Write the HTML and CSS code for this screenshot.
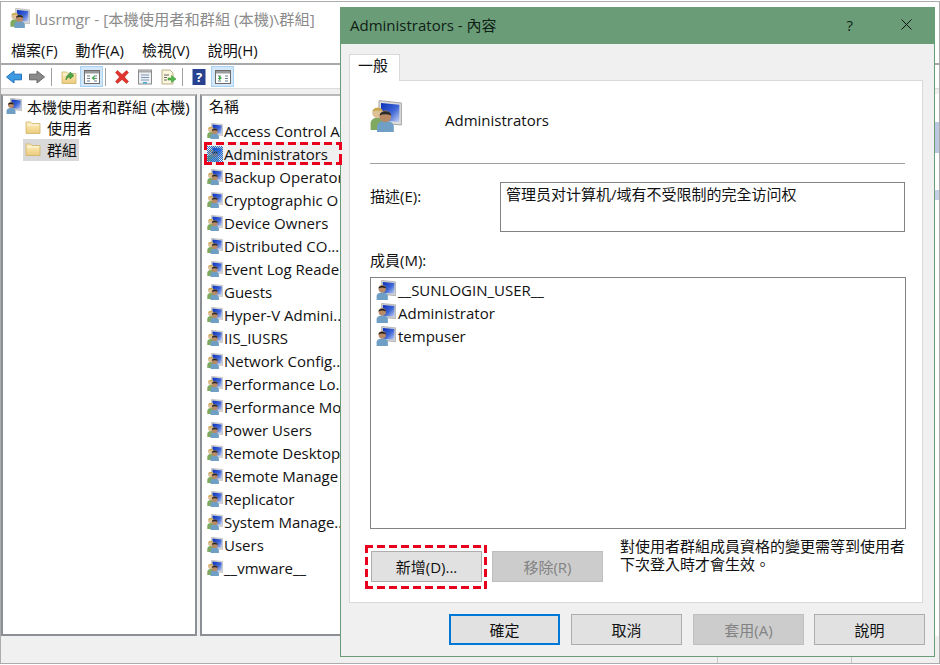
FILE: index.html
```html
<!DOCTYPE html>
<html lang="zh-Hant">
<head>
<meta charset="utf-8">
<title>lusrmgr</title>
<link rel="stylesheet" href="styles.css">
</head>
<body>
<svg class="sprite" aria-hidden="true">
  <defs>
    <linearGradient id="scr" x1="0" y1="0" x2="1" y2="1"><stop offset="0" stop-color="#0a2fb8"/><stop offset="0.55" stop-color="#3f66d6"/><stop offset="1" stop-color="#c5d3f2"/></linearGradient>
    <linearGradient id="fold" x1="0" y1="0" x2="0" y2="1"><stop offset="0" stop-color="#fdf0bf"/><stop offset="1" stop-color="#eccb7c"/></linearGradient>
    <pattern id="chk" width="2" height="2" patternUnits="userSpaceOnUse"><rect width="1" height="1" fill="#1f6fd0"/><rect x="1" y="1" width="1" height="1" fill="#1f6fd0"/></pattern>
    <symbol id="group" viewBox="0 0 16 16">
      <path d="M4.500 0.300 15.700 1.500V12.500L4.500 11.500Z" fill="#dcdcdc" stroke="#a5a5a5" stroke-width=".5"/>
      <path d="M5.500 1.500 14.700 2.400V11L5.500 10.200Z" fill="url(#scr)"/>
      <path d="M0.300 15v-3.200c0-1.900 1.600-2.900 3.500-2.900s3.500 1 3.500 2.900V15Z" fill="#7fa860"/>
      <circle cx="3.800" cy="6.400" r="2.700" fill="#dcc096"/>
      <path d="M1.200 5.800c.2-2.400 5-2.600 5.200 0-1.700-.8-3.500-.8-5.200 0Z" fill="#c9a84a"/>
      <path d="M3.500 16v-2.500c0-2.100 2-3.100 4.200-3.100s4.200 1 4.200 3.100V16Z" fill="#6f9fc4"/>
      <circle cx="7.700" cy="8.200" r="2.900" fill="#b98a66"/>
      <path d="M4.800 7.800c.2-2.800 5.600-3 5.800 0-1.800-.9-4-.9-5.800 0Z" fill="#2b2b2b"/>
    </symbol>
    <symbol id="user" viewBox="0 0 16 16">
      <path d="M4.500 0.300 15.700 1.500V12.500L4.500 11.500Z" fill="#d2d2d2" stroke="#9a9a9a" stroke-width=".5"/>
      <path d="M5.500 1.500 14.700 2.400V11L5.500 10.200Z" fill="url(#scr)"/>
      <path d="M0.500 16v-3c0-2 2-3 4.500-3s4.500 1 4.500 3v3Z" fill="#6f9fc4"/>
      <circle cx="5" cy="7" r="3" fill="#b98a66"/>
      <path d="M2 6.700c.2-2.700 5.800-2.900 6 0-1.800-.9-4.200-.9-6 0Z" fill="#1d1d1d"/>
    </symbol>
    <symbol id="folder" viewBox="0 0 16 16">
      <path d="M1 3h4.500l1.500 1.500h8v10H1Z" fill="url(#fold)" stroke="#cfb36a" stroke-width=".8"/>
      <path d="M2 5.500h12v1H2Z" fill="#fff" opacity=".7"/>
    </symbol>
    <symbol id="pane" viewBox="0 0 16 16">
      <rect x=".5" y="1.500" width="15" height="13" fill="#fff" stroke="#6d6d6d"/>
      <rect x="1" y="2" width="14" height="2.500" fill="#9a9a9a"/>
      <path d="M3 7h3M3 9.500h3M3 12h3M10 7h3M10 9.500h3M10 12h3" stroke="#6d7f8f"/>
    </symbol>
  </defs>
</svg>

<div class="win">
  <header class="titlebar">
    <svg class="ico20"><use href="#group"/></svg>
    <span class="title-text">lusrmgr - [本機使用者和群組 (本機)\群組]</span>
  </header>
  <nav class="menubar">
    <span>檔案(F)</span><span>動作(A)</span><span>檢視(V)</span><span>說明(H)</span>
  </nav>
  <div class="toolbar">
    <svg class="tool" viewBox="0 0 16 16"><path d="M.5 8 8 2V5.200H15.500V10.800H8V14Z" fill="#3d9be4" stroke="#1d6fb8"/></svg>
    <svg class="tool tool-next" viewBox="0 0 16 16"><path d="M15.500 8 8 2V5.200H.5V10.800H8V14Z" fill="#8a8a8a" stroke="#666"/></svg>
    <i class="sep sep-a"></i>
    <svg class="tool" viewBox="0 0 16 16"><use href="#folder"/><path d="M5 11c0-4 2-6 4-6V3l4 3.500L9 10V8c-1.500 0-3 1-4 3Z" fill="#4ea84a" stroke="#2f7d2f" stroke-width=".6"/></svg>
    <span class="tool-btn tool-btn-a"><svg class="ico16" viewBox="0 0 16 16"><use href="#pane"/><path d="M10.500 6.500 7.500 9l3 2.500Z" fill="#3fae49"/></svg></span>
    <i class="sep sep-b"></i>
    <svg class="tool tool-x" viewBox="0 0 16 16"><path d="M1.500 3.500 3.500 1.500 8 5.500 12.500 1.500 14.500 3.500 10.500 8 14.500 12.500 12.500 14.500 8 10.500 3.500 14.500 1.500 12.500 5.500 8Z" fill="#e0342c" stroke="#b32018" stroke-width=".5"/></svg>
    <svg class="tool tool-props" viewBox="0 0 16 16"><rect x="1.500" y="1" width="13" height="14" fill="#eef1f4" stroke="#8b8b8b"/><rect x="2" y="1.500" width="12" height="2" fill="#a8a8a8"/><path d="M4 6h8M4 8.500h8M4 11h8" stroke="#7f97b5"/><rect x="6" y="13" width="4" height="1.500" fill="#3fa7d8"/></svg>
    <svg class="tool tool-export" viewBox="0 0 16 16"><path d="M2 1h8l3 3v11H2Z" fill="#fbf6dc" stroke="#b8b08a"/><path d="M4 6h5M4 8.500h3M4 11h3" stroke="#666"/><path d="M8 9h3.500V6.500L16 10l-4.500 3.500V11H8Z" fill="#55b84c" stroke="#2f8a2f" stroke-width=".5"/></svg>
    <i class="sep sep-c"></i>
    <svg class="tool tool-help" viewBox="0 0 16 16"><rect x="1.500" y="0" width="13" height="16" fill="#26418f"/><text x="8" y="12.500" text-anchor="middle" class="help-q">?</text></svg>
    <span class="tool-btn tool-btn-b"><svg class="ico16" viewBox="0 0 16 16"><use href="#pane"/><path d="M4 6.500 7 9l-3 2.500Z" fill="#3fae49"/></svg></span>
  </div>
  <div class="strip"></div>
  <main class="panes">
    <section class="pane-left">
      <div class="tree-root"><svg class="ico16"><use href="#user"/></svg><span>本機使用者和群組 (本機)</span></div>
      <div class="tree-item tree-first"><svg class="ico16"><use href="#folder"/></svg><span>使用者</span></div>
      <div class="tree-item is-selected"><svg class="ico16"><use href="#folder"/></svg><span>群組</span></div>
    </section>
    <section class="pane-right">
      <div class="col-head">名稱</div>
      <div class="row"><svg class="ico16"><use href="#group"/></svg><span>Access Control A</span></div>
      <div class="row row-hit"><svg class="ico16"><use href="#group"/><rect width="16" height="16" fill="url(#chk)"/></svg><span>Administrators</span></div>
      <div class="row"><svg class="ico16"><use href="#group"/></svg><span>Backup Operator</span></div>
      <div class="row"><svg class="ico16"><use href="#group"/></svg><span>Cryptographic O</span></div>
      <div class="row"><svg class="ico16"><use href="#group"/></svg><span>Device Owners</span></div>
      <div class="row"><svg class="ico16"><use href="#group"/></svg><span>Distributed CO...</span></div>
      <div class="row"><svg class="ico16"><use href="#group"/></svg><span>Event Log Reade</span></div>
      <div class="row"><svg class="ico16"><use href="#group"/></svg><span>Guests</span></div>
      <div class="row"><svg class="ico16"><use href="#group"/></svg><span>Hyper-V Admini...</span></div>
      <div class="row"><svg class="ico16"><use href="#group"/></svg><span>IIS_IUSRS</span></div>
      <div class="row"><svg class="ico16"><use href="#group"/></svg><span>Network Config...</span></div>
      <div class="row"><svg class="ico16"><use href="#group"/></svg><span>Performance Lo...</span></div>
      <div class="row"><svg class="ico16"><use href="#group"/></svg><span>Performance Mo</span></div>
      <div class="row"><svg class="ico16"><use href="#group"/></svg><span>Power Users</span></div>
      <div class="row"><svg class="ico16"><use href="#group"/></svg><span>Remote Desktop</span></div>
      <div class="row"><svg class="ico16"><use href="#group"/></svg><span>Remote Manage</span></div>
      <div class="row"><svg class="ico16"><use href="#group"/></svg><span>Replicator</span></div>
      <div class="row"><svg class="ico16"><use href="#group"/></svg><span>System Manage...</span></div>
      <div class="row"><svg class="ico16"><use href="#group"/></svg><span>Users</span></div>
      <div class="row"><svg class="ico16"><use href="#group"/></svg><span>__vmware__</span></div>
    </section>
    <aside class="action-pane"><i class="action-a"></i><i class="action-b"></i></aside>
  </main>
  <footer class="status"><i class="status-a"></i><i class="status-b"></i></footer>
</div>

<div class="dialog">
  <div class="dlg-title">
    <span class="dlg-title-text">Administrators - 內容</span>
    <span class="dlg-help">?</span>
    <svg class="dlg-close" viewBox="0 0 11 11"><path d="M.5.500 10.500 10.500M10.500.500 .5 10.500" stroke="#111" fill="none"/></svg>
  </div>
  <div class="dlg-body">
    <div class="tab">一般</div>
    <div class="panel">
      <div class="panel-head">
        <svg class="ico-big"><use href="#group"/></svg>
        <span class="panel-name">Administrators</span>
      </div>
      <hr class="divider">
      <div class="desc-row">
        <span class="desc-label">描述(E):</span>
        <div class="desc-box">管理员对计算机/域有不受限制的完全访问权</div>
      </div>
      <span class="members-label">成員(M):</span>
      <div class="members">
        <div class="member"><svg class="ico20"><use href="#user"/></svg><span>__SUNLOGIN_USER__</span></div>
        <div class="member"><svg class="ico20"><use href="#user"/></svg><span>Administrator</span></div>
        <div class="member"><svg class="ico20"><use href="#user"/></svg><span>tempuser</span></div>
      </div>
      <div class="actions">
        <div class="hit-box"><button class="btn">新增(D)...</button></div>
        <button class="btn btn-off btn-remove">移除(R)</button>
        <p class="note">對使用者群組成員資格的變更需等到使用者<br>下次登入時才會生效。</p>
      </div>
    </div>
    <div class="dlg-foot">
      <button class="btn btn-main">確定</button>
      <button class="btn">取消</button>
      <button class="btn btn-off">套用(A)</button>
      <button class="btn btn-last">說明</button>
    </div>
  </div>
</div>
</body>
</html>
```
FILE: styles.css
```css
* { box-sizing: border-box; }
html, body { margin: 0; padding: 0; }
body {
  width: 940px;
  height: 665px;
  overflow: hidden;
  position: relative;
  background: #fff;
  font-family: "Open Sans", "Noto Sans CJK TC", sans-serif;
  font-size: 15px;
  color: #111;
}
.sprite { position: absolute; width: 0; height: 0; }
.ico16 { width: 16px; height: 16px; flex: none; display: block; }
.ico20 { width: 20px; height: 20px; flex: none; display: block; }

.win {
  margin-top: 1px;
  height: 663px;
  border: 1px solid #acacac;
  display: flex;
  flex-direction: column;
  background: #fff;
}
.titlebar {
  height: 34px;
  padding: 0 0 2px 9px;
  display: flex;
  align-items: center;
  gap: 5px;
  flex: none;
}
.title-text { color: #8b8b8b; font-size: 15.250px; }
.menubar {
  height: 29px;
  padding: 0 0 0 10px;
  display: flex;
  align-items: center;
  gap: 18px;
  flex: none;
  border-bottom: 2px solid #a8a8a8;
}
.toolbar {
  height: 23px;
  flex: none;
  display: flex;
  align-items: center;
  padding-left: 5px;
}
.tool { width: 16px; height: 16px; flex: none; display: block; }
.tool-next { margin-left: 7px; }
.sep { width: 1px; height: 18px; background: #a0a0a0; flex: none; display: block; }
.sep-a { margin: 0 9px 0 6px; }
.tool-btn {
  width: 23px;
  height: 21px;
  background: #d3e7f8;
  border: 1px solid #a8d2f4;
  display: flex;
  align-items: center;
  justify-content: center;
  flex: none;
}
.tool-btn-a { margin-left: 3px; }
.sep-b { margin: 0 8px 0 2px; }
.tool-props { margin-left: 7px; }
.tool-export { margin-left: 7px; }
.sep-c { margin: 0 8px 0 6px; }
.tool-btn-b { margin-left: 4px; }
.help-q { font-size: 13px; font-weight: 700; fill: #fff; }
.strip {
  height: 6px;
  flex: none;
  background: #f0f0f0;
  border-top: 1px solid #dcdcdc;
}
.panes {
  flex: 1;
  min-height: 0;
  display: flex;
  gap: 3px;
  background: #f0f0f0;
}
.pane-left, .pane-right {
  background: #fff;
  border: 2px solid #8c8f94;
  border-top-color: #b9b9b9;
}
.pane-left { width: 196px; flex: none; padding: 0 0 0 3px; overflow: hidden; }
.pane-right { flex: 1; min-width: 0; padding: 0 0 0 2px; overflow: hidden; }
.action-pane { width: 5px; flex: none; margin-left: -3px; background: #fff; display: flex; flex-direction: column; }
.action-a { display: block; height: 31px; margin-top: 28px; background: #b9c7e0; }
.action-b { display: block; height: 10px; margin-top: 37px; background: #c3cfe4; }
.tree-root { display: flex; align-items: center; gap: 5px; height: 22px; padding-bottom: 2px; white-space: nowrap; }
.tree-item {
  margin: 0 0 0 17px;
  width: 56px;
  height: 22px;
  padding: 0 0 2px 2px;
  display: flex;
  align-items: center;
  gap: 6px;
  white-space: nowrap;
}
.tree-first { margin-top: -1px; }
.is-selected { background: #d9d9d9; }
.col-head { height: 23px; padding-left: 5px; line-height: 20px; }
.row {
  height: 23px;
  display: flex;
  align-items: center;
  gap: 1px;
  padding-left: 3px;
  white-space: nowrap;
}
.row-hit {
  position: relative;
  z-index: 2;
  width: 138px;
  background:
    repeating-linear-gradient(90deg, #e8001c 0 8px, transparent 8px 12px) left top / 100% 3px no-repeat,
    repeating-linear-gradient(90deg, #e8001c 0 8px, transparent 8px 12px) left bottom / 100% 3px no-repeat,
    repeating-linear-gradient(180deg, #e8001c 0 8px, transparent 8px 12px) left top / 3px 100% no-repeat,
    repeating-linear-gradient(180deg, #e8001c 0 8px, transparent 8px 12px) right top / 3px 100% no-repeat,
    #f0f0f0;
}
.status {
  height: 27px;
  flex: none;
  background: #f0f0f0;
  display: flex;
}
.status-a { display: block; width: 717px; border-right: 1px solid #c8c8c8; }
.status-b { display: block; width: 134px; border-right: 1px solid #c8c8c8; }

.dialog {
  position: absolute;
  z-index: 1;
  left: 340px;
  top: 7px;
  width: 595px;
  height: 650px;
  border: 1px solid #6a9c78;
  border-top: 0;
  display: flex;
  flex-direction: column;
  background: #f0f0f0;
}
.dlg-title {
  height: 37px;
  flex: none;
  background: #6a9c78;
  display: flex;
  align-items: center;
  padding: 0 0 2px 9px;
  color: #102015;
}
.dlg-title-text { flex: 1; }
.dlg-help { margin-right: 48px; }
.dlg-close { width: 11px; height: 11px; margin-right: 22px; }
.dlg-body { flex: 1; padding: 10px 11px 0 8px; display: flex; flex-direction: column; min-height: 0; }
.tab {
  width: 51px;
  height: 27px;
  background: #fff;
  border: 1px solid #d9d9d9;
  border-bottom: 0;
  padding: 0 0 0 8px;
  line-height: 20px;
  margin-bottom: -1px;
  position: relative;
  z-index: 1;
}
.panel {
  height: 523px;
  flex: none;
  background: #fff;
  border: 1px solid #d9d9d9;
  padding: 17px 17px 0 20px;
  display: flex;
  flex-direction: column;
}
.panel-head { height: 36px; display: flex; align-items: center; gap: 43px; flex: none; }
.panel-name { padding-top: 8px; }
.ico-big { width: 32px; height: 34px; flex: none; display: block; }
.divider { margin: 29px 0 0; border: 0; border-top: 1px solid #a0a0a0; width: 535px; flex: none; }
.desc-row { display: flex; margin-top: 18px; flex: none; height: 50px; }
.desc-label { width: 130px; padding-top: 3px; line-height: 22px; flex: none; }
.desc-box {
  width: 405px;
  height: 50px;
  border: 1px solid #828282;
  padding: 0 5px;
  line-height: 22px;
}
.members-label { margin-top: 17px; line-height: 22px; height: 22px; display: block; flex: none; }
.members {
  margin-top: 6px;
  width: 536px;
  height: 252px;
  border: 1px solid #828282;
  padding: 0 0 0 5px;
  flex: none;
}
.member { height: 23px; display: flex; align-items: center; gap: 2px; }
.actions { display: flex; align-items: flex-start; margin: 16px 0 0 -5px; flex: none; }
.hit-box {
  flex: none;
  padding: 6px 5px 7px 6px;
  margin-right: 5px;
  background:
    repeating-linear-gradient(90deg, #e8001c 0 8px, transparent 8px 12px) left top / 100% 3px no-repeat,
    repeating-linear-gradient(90deg, #e8001c 0 8px, transparent 8px 12px) left bottom / 100% 3px no-repeat,
    repeating-linear-gradient(180deg, #e8001c 0 8px, transparent 8px 12px) left top / 3px 100% no-repeat,
    repeating-linear-gradient(180deg, #e8001c 0 8px, transparent 8px 12px) right top / 3px 100% no-repeat;
}
.btn {
  width: 111px;
  height: 31px;
  background: #e1e1e1;
  border: 1px solid #adadad;
  font: inherit;
  color: #111;
  padding: 0;
  display: block;
  flex: none;
}
.btn-off { background: #cccccc; border-color: #bfbfbf; color: #838383; }
.btn-remove { margin-top: 6px; }
.note { margin: -8px 0 0 17px; line-height: 18px; width: 300px; }
.dlg-foot { display: flex; justify-content: flex-end; gap: 11px; margin: 11px -2px 0 0; }
.btn-main { border: 2px solid #0078d7; }
.btn-last { margin-left: -1px; }
```
